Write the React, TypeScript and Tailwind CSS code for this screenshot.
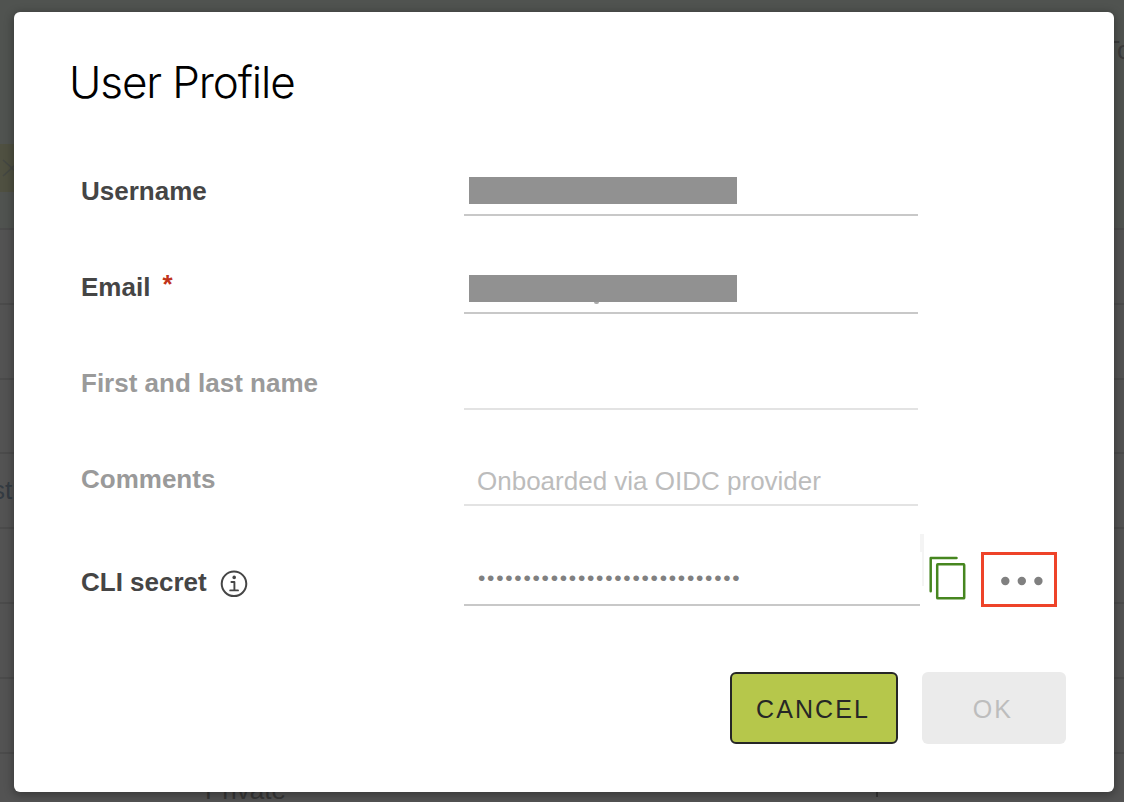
import type { ReactNode } from "react";

const tableRows = ["", "", "", "st", "", "", ""];

function Backdrop() {
  return (
    <div aria-hidden="true" className="absolute inset-0 flex flex-col bg-[#535353] text-[#3b3b3b]">
      <div className="flex h-9 shrink-0 bg-[#505350]" />
      <div className="flex h-[194px] shrink-0 flex-col border-b-2 border-[#4b4b4b] bg-[#505350]">
        <div className="flex h-[108px] justify-end overflow-hidden">
          <span className="w-[20px] whitespace-nowrap text-[26px] leading-[28px]">To</span>
        </div>
        <div className="flex h-12 w-9 items-center overflow-hidden bg-[#4f5041]">
          <svg width="16" height="20" viewBox="0 0 16 20" fill="none" stroke="#444743" strokeWidth="1.5">
            <path d="M3 2l9 8-9 8M16 7l-5 3 5 3" />
          </svg>
        </div>
      </div>
      {tableRows.map((text, i) => (
        <div key={i} className="flex h-[74.8px] shrink-0 items-center border-b-2 border-[#4b4b4b]">
          <span className="-ml-[8px] text-[26px] text-[#343b42]">{text}</span>
        </div>
      ))}
      <div className="flex grow overflow-hidden pl-[205px] pt-[21px] text-[26px] leading-[30px]">
        <span className="w-[671px] text-[#363636]">Private</span>
        <span className="h-[22px] w-[2px] bg-[#363636]" />
      </div>
    </div>
  );
}

function Label({ children, muted, className }: { children: ReactNode; muted?: boolean; className: string }) {
  return (
    <div
      className={`flex w-[383px] items-center text-[26px] font-bold leading-[30px] ${
        muted ? "text-[#9a9a9a]" : "text-[#454545]"
      } ${className}`}
    >
      {children}
    </div>
  );
}

function InfoIcon() {
  return (
    <svg className="-mb-px ml-[13px] mt-[3px]" width="28" height="28" viewBox="0 0 28 28" fill="none" stroke="#454545">
      <circle cx="14" cy="13.8" r="12.3" strokeWidth="2" />
      <circle cx="14.2" cy="7.4" r="1.8" fill="#454545" stroke="none" />
      <path d="M11.4 12h3v8.3M10.2 20.4h7.8" strokeWidth="1.9" strokeLinecap="round" strokeLinejoin="round" />
    </svg>
  );
}

function CopyIcon() {
  return (
    <svg width="38" height="44" viewBox="0 0 38 44" fill="none" stroke="#46861f" strokeWidth="2.5" strokeLinecap="round" strokeLinejoin="round">
      <path d="M2.7 35.2V2H28.5" />
      <rect x="9.2" y="8.3" width="27" height="34" rx="0.6" />
    </svg>
  );
}

export default function App() {
  return (
    <div className="relative h-[802px] w-[1124px] overflow-hidden font-['Liberation_Sans',Arial,sans-serif]">
      <Backdrop />
      <div className="relative px-[14px] pt-3">
        <div role="dialog" className="mr-[-4px] flex h-[780px] w-[1100px] flex-col rounded-md bg-white shadow-[0_2px_10px_1px_rgba(0,0,0,0.32)]">
          <h1 className="h-[144px] pl-[55px] pt-[43px] font-['Inter','Liberation_Sans',sans-serif] text-[44px] font-light leading-[54px] tracking-[-1.1px] text-black">
            User Profile
          </h1>
          <div className="flex flex-col pl-[67px]">
            <div className="flex h-[60px] items-end">
              <Label className="pb-[10px]">Username</Label>
              <div className="flex h-[60px] w-[454px] items-end border-b-2 border-[#c8c8c8] pb-[10px] pl-[5px]">
                <div className="h-[27px] w-[268px] bg-[#919191]" />
              </div>
            </div>
            <div className="flex h-[98px] items-end">
              <Label className="pb-[12px]">
                Email<span className="ml-[12px] -translate-y-[3px] text-[#c1331a]">*</span>
              </Label>
              <div className="flex h-[60px] w-[454px] flex-col justify-end border-b-2 border-[#c8c8c8] pb-[8px] pl-[5px]">
                <div className="h-[27px] w-[268px] bg-[#919191]" />
                <div className="ml-[125px] h-[2px] w-[5px] rounded-b-full bg-[#aaaaaa]" />
              </div>
            </div>
            <div className="flex h-[96px] items-end">
              <Label muted className="pb-[12px]">First and last name</Label>
              <div className="h-[60px] w-[454px] border-b-2 border-[#e3e3e3]" />
            </div>
            <div className="flex h-[96px] items-end">
              <Label muted className="pb-[12px]">Comments</Label>
              <div className="flex h-[60px] w-[454px] items-end border-b-2 border-[#e3e3e3] pb-[8px] pl-[13px] text-[26px] leading-[30px] text-[#bcbcbc]">
                Onboarded via OIDC provider
              </div>
            </div>
            <div className="flex h-[100px] items-end">
              <Label className="pb-[9px]">
                CLI secret
                <InfoIcon />
              </Label>
              <div className="flex h-[60px] w-[456px] items-end border-b-2 border-[#c8c8c8] pb-[11px] pl-[14px] text-[21px] leading-[30px] tracking-[1.73px] text-[#808080]">
                •••••••••••••••••••••••••••••
              </div>
              <div className="mb-[20px] flex h-[52px] w-1 flex-col items-end">
                <div className="h-[18px] w-1 bg-[#f4f4f4]" />
                <div className="h-[34px] w-[2px] bg-[#f4f4f4]" />
              </div>
              <div className="mb-[6px] ml-[4px] h-[44px]">
                <CopyIcon />
              </div>
              <button aria-label="More" className="-mb-px ml-[15px] flex h-[55px] w-[76px] items-center justify-center border-[3px] border-[#ee4329]">
                <svg className="ml-[5px] mt-[3px]" width="44" height="10" viewBox="0 0 44 10" fill="#808080">
                  <circle cx="5.3" cy="5" r="4.2" />
                  <circle cx="21.8" cy="5" r="4.2" />
                  <circle cx="38.4" cy="5" r="4.2" />
                </svg>
              </button>
            </div>
          </div>
          <div className="mt-[66px] flex justify-end gap-6 pr-12">
            <button className="flex h-[72px] w-[168px] items-center justify-center rounded-md border-2 border-[#262626] bg-[#b6c74b] pr-[2px] pt-[3px] text-[25px] tracking-[2.1px] text-[#262626]">
              CANCEL
            </button>
            <button disabled className="flex h-[72px] w-[144px] items-center justify-center rounded-md bg-[#ebebeb] pr-[2px] pt-[3px] text-[25px] tracking-[2.1px] text-[#bdbdbd]">
              OK
            </button>
          </div>
        </div>
      </div>
    </div>
  );
}
